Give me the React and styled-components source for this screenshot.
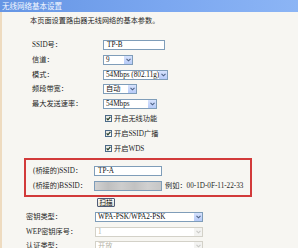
import React from "react";
import styled, { createGlobalStyle } from "styled-components";

const GlobalStyle = createGlobalStyle`
  html, body { margin: 0; padding: 0; background: #f7f6f2; }
  body { font-family: "Liberation Serif", "Noto Sans CJK SC", serif; }
`;

const Page = styled.div`
  width: 298px;
  height: 248px;
  overflow: hidden;
  background: #f7f6f2;
  color: #262626;
  font-size: 7.2px;
  display: flex;
  flex-direction: column;
`;

const TitleBar = styled.div`
  flex: none;
  height: 12px;
  line-height: 12px;
  padding-left: 2px;
  background: linear-gradient(to right, #6595e4, #7ba7f0 55%, #8cb5f5);
  color: #f4f8ff;
  font-size: 7.5px;
  font-family: "Noto Sans CJK SC", sans-serif;
  white-space: nowrap;
`;

const Body = styled.div`
  flex: 1;
  border-left: 2px solid #eedbc0;
  display: flex;
  flex-direction: column;
`;

const Intro = styled.p`
  margin: 4px 0 0 28px;
  height: 10px;
  line-height: 10px;
  white-space: nowrap;
`;

const Section = styled.div`
  display: flex;
  flex-direction: column;
  padding-left: ${(p) => p.$indent}px;
  margin-top: ${(p) => p.$top}px;
`;

const Row = styled.div`
  display: grid;
  grid-template-columns: ${(p) => p.$label}px auto;
  justify-items: start;
  align-items: center;
  height: ${(p) => p.$h}px;
`;

const Label = styled.span`
  white-space: nowrap;
  line-height: 10px;
`;

const Control = styled.div`
  display: flex;
  align-items: center;
  grid-column: 2;
`;

const TextBox = styled.div`
  box-sizing: border-box;
  width: ${(p) => p.$w}px;
  height: 10px;
  border: 1px solid #7f9db9;
  background: ${(p) =>
    p.$blur
      ? "linear-gradient(90deg, #d2d2d2, #bfbfbf 20%, #cdcdcd 40%, #c2c2c2 60%, #d0d0d0 80%, #c6c6c6)"
      : "#ffffff"};
  padding-left: 3px;
  line-height: 8px;
  color: #111;
  white-space: nowrap;
`;

const Combo = styled.div`
  box-sizing: border-box;
  width: ${(p) => p.$w}px;
  height: 10px;
  border: 1px solid ${(p) => (p.$disabled ? "#d3d1c8" : "#7f9db9")};
  background: #ffffff;
  display: flex;
  align-items: stretch;
  color: ${(p) => (p.$disabled ? "#b5b2a6" : "#111")};
`;

const ComboText = styled.span`
  flex: 1;
  padding-left: 2px;
  line-height: 8px;
  white-space: nowrap;
  overflow: hidden;
`;

const ArrowBtn = styled.span`
  flex: none;
  width: 8px;
  background: ${(p) => (p.$disabled ? "#f3f3f1" : "linear-gradient(#d6e2fd, #b7cbf8)")};
  display: flex;
  align-items: center;
  justify-content: center;
`;

const Check = styled.span`
  box-sizing: border-box;
  width: 7px;
  height: 7px;
  margin-left: 2px;
  margin-right: 2px;
  border: 1px solid #4b6a88;
  background: linear-gradient(135deg, #e4e3dc, #ffffff);
  display: flex;
  align-items: center;
  justify-content: center;
`;

const CheckText = styled.span`
  white-space: nowrap;
  line-height: 10px;
`;

const RedBox = styled.div`
  box-sizing: border-box;
  margin: 2px 0 0 22px;
  width: 228px;
  border: 2px solid #d23a3a;
  padding: 3.5px 0 1.5px 7px;
  display: flex;
  flex-direction: column;
`;

const Hint = styled.span`
  margin-left: 3px;
  white-space: nowrap;
  line-height: 10px;
`;

const ScanRow = styled.div`
  display: flex;
  padding-left: 95px;
  margin-top: 1px;
  height: 9px;
`;

const ScanButton = styled.span`
  box-sizing: border-box;
  width: 18px;
  height: 9px;
  border: 1px solid #4f5b77;
  border-radius: 1px;
  background: linear-gradient(#fafaf7, #e3e1d6);
  font-family: "Noto Sans CJK SC", sans-serif;
  font-size: 6.5px;
  line-height: 7px;
  text-align: center;
  color: #111;
`;

const Chevron = ({ disabled }) => (
  <svg width="5" height="4" viewBox="0 0 5 4">
    <path d="M0.5 0.8 L2.5 2.8 L4.5 0.8" fill="none" stroke={disabled ? "#c9c9c6" : "#4d6185"} strokeWidth="1.1" />
  </svg>
);

const Tick = () => (
  <svg width="5" height="5" viewBox="0 0 5 5">
    <path d="M0.6 2.4 L1.9 3.8 L4.4 0.9" fill="none" stroke="#2a402a" strokeWidth="1.3" />
  </svg>
);

const Select = ({ w, text, disabled }) => (
  <Combo $w={w} $disabled={disabled}>
    <ComboText>{text}</ComboText>
    <ArrowBtn $disabled={disabled}>
      <Chevron disabled={disabled} />
    </ArrowBtn>
  </Combo>
);

const CheckItem = ({ label }) => (
  <Row $label={71} $h={14.8}>
    <Control>
      <Check>
        <Tick />
      </Check>
      <CheckText>{label}</CheckText>
    </Control>
  </Row>
);

export default function App() {
  return (
    <>
      <GlobalStyle />
      <Page>
        <TitleBar>无线网络基本设置</TitleBar>
        <Body>
          <Intro>本页面设置路由器无线网络的基本参数。</Intro>
          <Section $indent={30} $top={11.6}>
            <Row $label={71} $h={14.8}>
              <Label>SSID号：</Label>
              <Control>
                <TextBox $w={62}>TP-B</TextBox>
              </Control>
            </Row>
            <Row $label={71} $h={14.8}>
              <Label>信道：</Label>
              <Control>
                <Select w={30} text="9" />
              </Control>
            </Row>
            <Row $label={71} $h={14.8}>
              <Label>模式：</Label>
              <Control>
                <Select w={65} text="54Mbps (802.11g)" />
              </Control>
            </Row>
            <Row $label={71} $h={14.8}>
              <Label>频段带宽：</Label>
              <Control>
                <Select w={34} text="自动" />
              </Control>
            </Row>
            <Row $label={71} $h={14.8}>
              <Label>最大发送速率：</Label>
              <Control>
                <Select w={54} text="54Mbps" />
              </Control>
            </Row>
            <CheckItem label="开启无线功能" />
            <CheckItem label="开启SSID广播" />
            <CheckItem label="开启WDS" />
          </Section>
          <RedBox>
            <Row $label={61} $h={15}>
              <Label>(桥接的)SSID：</Label>
              <Control>
                <TextBox $w={68}>TP-A</TextBox>
              </Control>
            </Row>
            <Row $label={61} $h={15}>
              <Label>(桥接的)BSSID：</Label>
              <Control>
                <TextBox $w={68} $blur />
                <Hint>例如：00-1D-0F-11-22-33</Hint>
              </Control>
            </Row>
          </RedBox>
          <ScanRow>
            <ScanButton>扫描</ScanButton>
          </ScanRow>
          <Section $indent={24} $top={2.8}>
            <Row $label={69} $h={14.6}>
              <Label>密钥类型：</Label>
              <Control>
                <Select w={108} text="WPA-PSK/WPA2-PSK" />
              </Control>
            </Row>
            <Row $label={69} $h={14.6}>
              <Label>WEP密钥序号：</Label>
              <Control>
                <Select w={108} text="1" disabled />
              </Control>
            </Row>
            <Row $label={69} $h={14.6}>
              <Label>认证类型：</Label>
              <Control>
                <Select w={108} text="开放" disabled />
              </Control>
            </Row>
          </Section>
        </Body>
      </Page>
    </>
  );
}
